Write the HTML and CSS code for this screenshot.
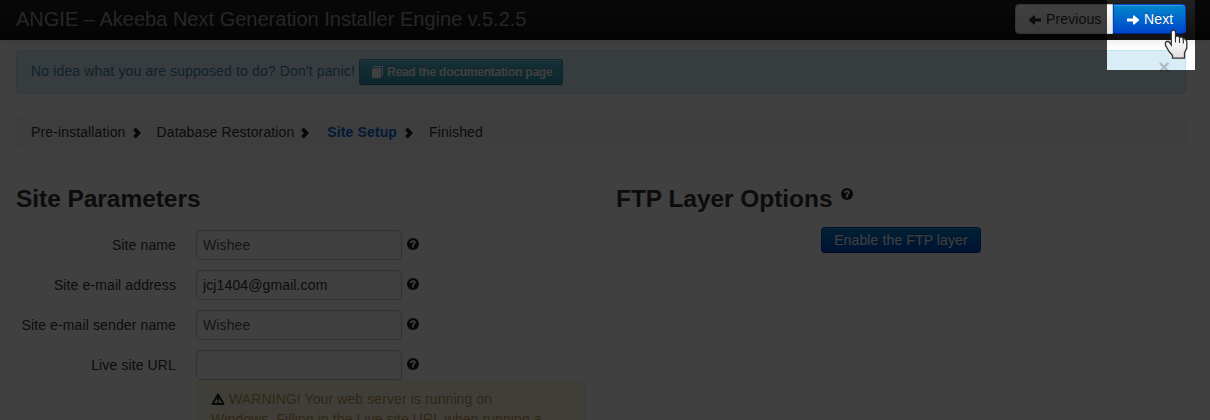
FILE: index.html
```html
<!DOCTYPE html>
<html lang="en">
<head>
<meta charset="utf-8">
<title>ANGIE – Site Setup</title>
<link rel="stylesheet" href="styles.css">
</head>
<body>
<svg class="defs" width="0" height="0">
  <symbol id="help" viewBox="0 0 12 12"><circle cx="6" cy="6" r="6" fill="#222"/><path d="M3.9 4.9C3.900 3.500 4.800 3.100 6 3.100s1.900.5 1.900 1.500c0 1.300-1.700 1.200-1.700 2.400H5.300" fill="none" stroke="#fff" stroke-width="1.700"/><path d="M5 8h2v1.500H5z" fill="#fff"/></symbol>
  <symbol id="chevron" viewBox="0 0 8 12"><path d="M1.500 1.800 5.400 6 1.500 10.200" fill="none" stroke="#222" stroke-width="3.700"/></symbol>
  <symbol id="arrow" viewBox="0 0 12 10"><path d="M0 3.500h6V.5h1.200L12 4.500v1L7.200 9.500H6v-3H0z" fill="currentColor"/></symbol>
</svg>
<header class="navbar">
  <div class="brand">ANGIE – Akeeba Next Generation Installer Engine v.5.2.5</div>
  <div class="btn-group">
    <a class="btn btn-prev"><svg class="arrow flip"><use href="#arrow"/></svg>Previous</a><a class="btn btn-primary btn-next"><svg class="arrow"><use href="#arrow"/></svg>Next</a>
  </div>
</header>
<main class="page">
  <div class="alert info">
    <span>No idea what you are supposed to do? Don't panic!</span>
    <a class="btn btn-info"><svg class="book" viewBox="0 0 11 12"><path d="M0 2h9v10H0z" fill="#fff"/><path d="M1.200.5h9.300V10" fill="none" stroke="#fff"/></svg>Read the documentation page</a>
    <span class="close">×</span>
  </div>
  <ul class="steps">
    <li>Pre-installation<svg class="chevron"><use href="#chevron"/></svg></li>
    <li>Database Restoration<svg class="chevron"><use href="#chevron"/></svg></li>
    <li class="active">Site Setup<svg class="chevron"><use href="#chevron"/></svg></li>
    <li>Finished</li>
  </ul>
  <div class="columns">
    <section>
      <h3>Site Parameters</h3>
      <div class="row"><label>Site name</label><div class="field">Wishee</div><svg class="help"><use href="#help"/></svg></div>
      <div class="row"><label>Site e-mail address</label><div class="field dark">jcj1404@gmail.com</div><svg class="help"><use href="#help"/></svg></div>
      <div class="row"><label>Site e-mail sender name</label><div class="field">Wishee</div><svg class="help"><use href="#help"/></svg></div>
      <div class="row last"><label>Live site URL</label><div class="field"></div><svg class="help"><use href="#help"/></svg></div>
      <div class="alert warning"><svg class="warn" viewBox="0 0 14 12"><path d="M7 1.600 12.500 11H1.500z" fill="none" stroke="#222" stroke-width="2" stroke-linejoin="round"/><path d="M6 4.200h2v3.400H6zM6 8.300h2v1.400H6z" fill="#222"/></svg> WARNING! Your web server is running on Windows. Filling in the Live site URL when running a</div>
    </section>
    <section>
      <h3>FTP Layer Options <svg class="help"><use href="#help"/></svg></h3>
      <div class="center"><a class="btn btn-primary btn-ftp">Enable the FTP layer</a></div>
    </section>
  </div>
</main>
<div class="spotlight"></div>
<svg class="cursor" viewBox="0 0 24 30"><defs><linearGradient id="hand" x1="0" y1="0" x2="0" y2="1"><stop offset=".3" stop-color="#fff"/><stop offset="1" stop-color="#ddd"/></linearGradient></defs><path d="M8.500 29.200V26.500L5.500 23 1.500 16.500V13.500l1-1h2.300L7.300 16V2.500L8.500 1.200h1.800L11.500 2.500V7.800l1-.7h1.800l1.200 1.400 1-.3h1.600l1.200 1.700h1.600L22.800 12V19L20.500 24v5.200z" fill="url(#hand)" stroke="#333" stroke-width="1.300"/><path d="M11.500 7.500v6M15.500 8.500v5.500M19.300 10v4.500" stroke="#333" stroke-width="1.200" fill="none"/></svg>
</body>
</html>
```
FILE: styles.css
```css
* { box-sizing: border-box; }
html, body { height: 100%; overflow: hidden; }
body { margin: 0; background: #fff; color: #333; font: 14px/20px "Liberation Sans", Arial, sans-serif; letter-spacing: .12px; }
svg { display: inline-block; overflow: visible; }
.defs { position: absolute; }
.navbar { position: relative; height: 40px; padding: 0 24px 0 16px; display: flex; justify-content: space-between; background: linear-gradient(#222, #111); box-shadow: 0 1px 10px rgba(0,0,0,.1); border-bottom: 1px solid #111; }
.brand { font-size: 20px; line-height: 20px; padding-top: 9px; color: #999; letter-spacing: .01px; }
.btn-group { display: flex; padding-top: 4px; height: 34px; }
.btn { display: inline-block; border: 1px solid #bbb; border-radius: 4px; box-shadow: inset 0 1px 0 rgba(255,255,255,.2), 0 1px 2px rgba(0,0,0,.05); color: #333; white-space: nowrap; }
.btn-prev { width: 98px; padding: 4px 0 4px 13px; background: linear-gradient(#fff, #e6e6e6); border-color: #ccc; border-radius: 4px 0 0 4px; }
.btn-primary { color: #fff; background: linear-gradient(#08c, #04c); border-color: #04c #04c #002a80; text-shadow: 0 -1px 0 rgba(0,0,0,.25); }
.btn-next { width: 73px; padding: 4px 0 4px 13px; border-radius: 0 4px 4px 0; }
.arrow { width: 12px; height: 10px; margin-right: 5px; vertical-align: -.5px; }
.flip { transform: scaleX(-1); }
.page { padding: 10px 24px 0 16px; }
.alert { position: relative; border: 1px solid; border-radius: 4px; text-shadow: 0 1px 0 rgba(255,255,255,.5); }
.info { display: flex; height: 44px; padding: 8px 14px; background: #d9edf7; border-color: #bce8f1; color: #3a87ad; }
.info > span { line-height: 25px; }
.info > span:first-child { width: 324px; white-space: nowrap; letter-spacing: .14px; }
.info .close { position: absolute; right: 15px; top: 4px; font-size: 20px; font-weight: bold; color: #000; opacity: .2; }
.btn-info { width: 204px; height: 26px; margin-left: 4px; padding: 2px 0 2px 12px; color: #fff; font-size: 12px; font-weight: bold; letter-spacing: -.22px; background: linear-gradient(#5bc0de, #2f96b4); border-color: #2f96b4 #2f96b4 #1f6377; border-radius: 3px; text-shadow: 0 -1px 0 rgba(0,0,0,.25); }
.book { width: 11px; height: 12px; margin-right: 4px; vertical-align: -2px; }
.steps { display: flex; list-style: none; margin: 20px 0 29px; padding: 8px 15px; height: 36px; background: #f5f5f5; border-radius: 4px; }
.steps li { margin-right: 16px; }
.steps li:nth-child(2) { margin-right: 18px; }
.chevron { width: 8px; height: 12px; margin-left: 7px; vertical-align: -2px; }
.steps .active { color: #0069d6; font-weight: bold; }
.steps .active .chevron { margin-left: 8px; }
.columns { display: grid; grid-template-columns: 570px 570px; gap: 30px; }
h3 { margin: 0; font-size: 24.5px; line-height: 40px; height: 51px; letter-spacing: -.05px; }
.help { width: 12px; height: 12px; }
h3 .help { vertical-align: 7px; margin-left: 2px; }
.row { display: flex; height: 30px; margin-bottom: 10px; }
.row.last { margin-bottom: 0; }
.row label { width: 160px; padding-top: 5px; text-align: right; }
.field { width: 206px; margin-left: 20px; padding: 4px 6px; border: 1px solid #ccc; border-radius: 4px; color: #555; box-shadow: inset 0 1px 1px rgba(0,0,0,.075); }
.field.dark { color: #333; }
.row .help { margin: 8px 0 0 5px; }
.warning { margin-left: 180px; height: 70px; padding: 8px 35px 8px 14px; background: #fcf8e3; border-color: #fbeed5; color: #c09853; letter-spacing: .1px; }
.warn { width: 14px; height: 12px; vertical-align: -1px; }
.center { text-align: center; margin-top: -3px; }
.btn-ftp { width: 160px; height: 26px; line-height: 24px; }
.spotlight { position: absolute; left: 1107px; top: 0; width: 88px; height: 70px; box-shadow: 0 0 0 1300px rgba(0,0,0,.75); }
.cursor { position: absolute; left: 1164px; top: 29px; width: 24px; height: 30px; }
```
